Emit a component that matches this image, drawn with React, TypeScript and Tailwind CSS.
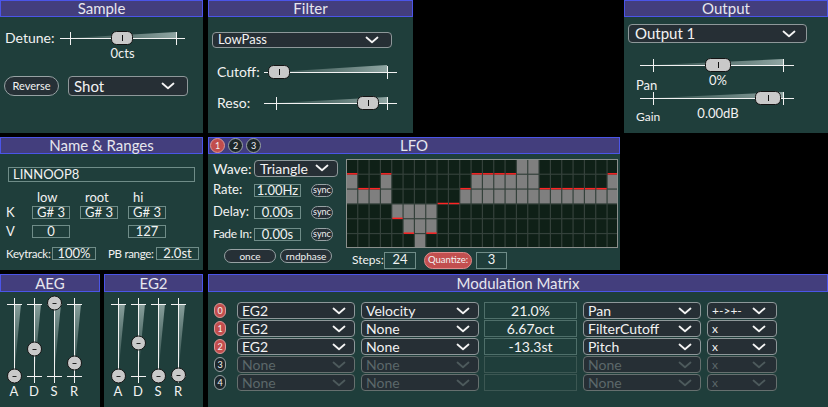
import React from "react";

const lfoSteps = [2, 1, 1, 2, -1, -2, -3, -2, 0, 0, 1, 2, 2, 2, 2, 3, 3, 1, 1, 1, 1, 1, 1, 2];

const matrix = [
  { n: 0, src: "EG2", via: "Velocity", amt: "21.0%", dst: "Pan", curve: "+->+-", on: true },
  { n: 1, src: "EG2", via: "None", amt: "6.67oct", dst: "FilterCutoff", curve: "x", on: true },
  { n: 2, src: "EG2", via: "None", amt: "-13.3st", dst: "Pitch", curve: "x", on: true },
  { n: 3, src: "None", via: "None", amt: "", dst: "None", curve: "x", on: false },
  { n: 4, src: "None", via: "None", amt: "", dst: "None", curve: "x", on: false },
];

function Chevron({ dim = false }: { dim?: boolean }) {
  return (
    <svg width="14" height="8" viewBox="0 0 14 8" className="shrink-0">
      <path
        d="M1.5 1.5 L7 6.2 L12.5 1.5"
        fill="none"
        stroke={dim ? "#4d5a5c" : "#f4f4f4"}
        strokeWidth="1.8"
        strokeLinecap="round"
        strokeLinejoin="round"
      />
    </svg>
  );
}

function Dropdown({ label, className = "", dim = false }: { label: string; className?: string; dim?: boolean }) {
  return (
    <div
      className={`flex items-center justify-between rounded-[4px] border bg-[#262f35] ${
        dim ? "border-[#66706f] text-[#5c686a]" : "border-[#8e989a] text-[#f2f2f2]"
      } ${className}`}
    >
      <span className="whitespace-nowrap">{label}</span>
      <Chevron dim={dim} />
    </div>
  );
}

function HSlider({ width, t1, t2, knob, knobW = 22, wedge = 6 }: { width: number; t1: number; t2: number; knob: number; knobW?: number; wedge?: number }) {
  return (
    <svg width={width} height={16} className="block shrink-0">
      <defs>
        <linearGradient id="wedgeH" x1="0" y1="0" x2="1" y2="0">
          <stop offset="0" stopColor="#6f8884" stopOpacity="0.3" />
          <stop offset="1" stopColor="#a3b8b5" stopOpacity="0.85" />
        </linearGradient>
      </defs>
      <polygon points={`${t1},8 ${t2},${8 - wedge} ${t2},8`} fill="url(#wedgeH)" />
      <line x1={0} y1={8.5} x2={width} y2={8.5} stroke="#f2f2f2" />
      <line x1={t1 + 0.5} y1={2} x2={t1 + 0.5} y2={15} stroke="#f2f2f2" />
      <line x1={t2 + 0.5} y1={2} x2={t2 + 0.5} y2={15} stroke="#f2f2f2" />
      <rect x={knob - knobW / 2 + 0.5} y={1.5} width={knobW - 1} height={13} rx={5} fill="#c9c9c9" stroke="#141414" />
      <line x1={knob + 0.5} y1={5} x2={knob + 0.5} y2={11} stroke="#111" />
    </svg>
  );
}

function VSlider({ knob }: { knob: number }) {
  return (
    <svg width={20} height={90} className="block">
      <defs>
        <linearGradient id="wedgeV" x1="0" y1="0" x2="0" y2="1">
          <stop offset="0" stopColor="#a3b8b5" stopOpacity="0.8" />
          <stop offset="1" stopColor="#6f8884" stopOpacity="0.2" />
        </linearGradient>
      </defs>
      <polygon points="10,9 17,9 10,81" fill="url(#wedgeV)" />
      <line x1={10.5} y1={3} x2={10.5} y2={88} stroke="#f2f2f2" />
      <line x1={3} y1={9.5} x2={18} y2={9.5} stroke="#f2f2f2" />
      <line x1={3} y1={81.5} x2={18} y2={81.5} stroke="#f2f2f2" />
      <circle cx={10.5} cy={knob} r={7} fill="#c9c9c9" stroke="#141414" />
      <line x1={8.5} y1={knob + 0.5} x2={12.5} y2={knob + 0.5} stroke="#222" />
    </svg>
  );
}

function Header({ title, h = "h-[17px]" }: { title: string; h?: string }) {
  return (
    <div className={`${h} flex shrink-0 items-center justify-center border border-[#4b55e8] bg-[#433e7d] text-[15px] leading-none text-[#e6e6ee]`}>
      {title}
    </div>
  );
}

function Box({ children, className = "" }: { children?: React.ReactNode; className?: string }) {
  return (
    <div className={`flex h-[13px] items-center justify-center whitespace-nowrap border border-[#6f8c88] text-[13px] leading-none ${className}`}>
      {children}
    </div>
  );
}

function Pill({ children, className = "" }: { children: React.ReactNode; className?: string }) {
  return (
    <div className={`flex items-center justify-center whitespace-nowrap rounded-full border border-[#97a2a4] bg-[#263036] ${className}`}>
      {children}
    </div>
  );
}

function Envelope({ title, knobs, className = "" }: { title: string; knobs: number[]; className?: string }) {
  return (
    <div className={`flex flex-col bg-[#1f3e3b] ${className}`}>
      <Header title={title} h="h-[18px]" />
      <div className="mt-[3px] flex pl-[4px]">
        {knobs.map((k, i) => (
          <div key={i} className="flex w-[20px] flex-col items-center">
            <VSlider knob={k} />
            <span className="text-[13px] leading-[13px]">{"ADSR"[i]}</span>
          </div>
        ))}
      </div>
    </div>
  );
}

function StepGrid() {
  const w = 272;
  const h = 89;
  const cw = w / 24;
  const ch = h / 6;
  return (
    <svg width={w} height={h} className="block">
      <rect x={0} y={0} width={w} height={h} fill="#34413b" />
      {Array.from({ length: 24 }).map((_, c) =>
        Array.from({ length: 6 }).map((_, r) => {
          const v = lfoSteps[c];
          const on = v > 0 ? r >= 3 - v && r <= 2 : v < 0 ? r >= 3 && r <= 2 - v : false;
          return (
            <rect
              key={`${c}-${r}`}
              x={c * cw + 1}
              y={r * ch + 1}
              width={cw - 1.2}
              height={ch - 1.2}
              fill={on ? "#7f7f7f" : "#0f2017"}
            />
          );
        })
      )}
      {lfoSteps.map((v, c) => (
        <line key={c} x1={c * cw + 1} y1={(3 - v) * ch} x2={(c + 1) * cw} y2={(3 - v) * ch} stroke="#ff2424" strokeWidth={1.5} />
      ))}
      <rect x={0.5} y={0.5} width={w - 1} height={h - 1} fill="none" stroke="#8a8f8c" />
    </svg>
  );
}

export default function App() {
  return (
    <div className="flex h-[407px] w-[828px] flex-col gap-[4px] overflow-hidden bg-black font-['Lato',sans-serif] text-[#f2f2f2]">
      {/* row 1 */}
      <div className="flex h-[133px]">
        <div className="flex w-[203px] flex-col bg-[#1f3e3b]">
          <Header title="Sample" />
          <div className="mt-[13px] flex h-[16px] items-center">
            <span className="w-[60px] pl-[5px] text-[14px] leading-none">Detune:</span>
            <HSlider width={125} t1={10} t2={116} knob={62} />
          </div>
          <div className="ml-[60px] w-[125px] text-center text-[13px] leading-[14px]">0cts</div>
          <div className="ml-[4px] mt-[16px] flex items-center gap-[9px]">
            <Pill className="h-[20px] w-[55px] text-[11px]">Reverse</Pill>
            <Dropdown label="Shot" className="h-[20px] w-[120px] pl-[5px] pr-[12px] text-[15px]" />
          </div>
        </div>

        <div className="ml-[5px] flex w-[205px] flex-col bg-[#1f3e3b]">
          <Header title="Filter" />
          <Dropdown label="LowPass" className="ml-[4px] mt-[15px] h-[16px] w-[180px] pl-[5px] pr-[12px] text-[13px]" />
          <div className="mt-[16px] flex h-[16px] items-center">
            <span className="w-[56px] pl-[9px] text-[14px] leading-none">Cutoff:</span>
            <HSlider width={133} t1={11} t2={123} knob={15} wedge={7} />
          </div>
          <div className="mt-[15px] flex h-[16px] items-center">
            <span className="w-[56px] pl-[9px] text-[14px] leading-none">Reso:</span>
            <HSlider width={133} t1={12} t2={123} knob={104} wedge={6} />
          </div>
        </div>

        <div className="flex-1" />

        <div className="flex w-[204px] flex-col bg-[#1f3e3b]">
          <Header title="Output" />
          <Dropdown label="Output 1" className="ml-[4px] mt-[7px] h-[19px] w-[179px] pl-[6px] pr-[10px] text-[15px]" />
          <div className="ml-[16px] mt-[14px]">
            <HSlider width={154} t1={13} t2={143} knob={78} knobW={26} />
          </div>
          <div className="flex h-[17px]">
            <span className="ml-[12px] w-[28px] pt-[4px] text-[13px] leading-[16px]">Pan</span>
            <span className="w-[108px] text-center text-[13px] leading-[14px]">0%</span>
          </div>
          <div className="ml-[16px]">
            <HSlider width={154} t1={13} t2={143} knob={128} knobW={26} />
          </div>
          <div className="flex">
            <span className="ml-[12px] w-[28px] pt-[3px] text-[12px] leading-[16px]">Gain</span>
            <span className="w-[108px] text-center text-[13px] leading-[14px]">0.00dB</span>
          </div>
        </div>
      </div>

      {/* row 2 */}
      <div className="flex h-[133px]">
        <div className="flex w-[203px] flex-col bg-[#1f3e3b]">
          <Header title="Name & Ranges" />
          <div className="mx-[8px] mt-[13px] flex h-[15px] items-center border border-[#6f8c88] pl-[4px] text-[13px]">
            LINNOOP8
          </div>
          <div className="mt-[8px] flex pl-[32px] text-[13px] leading-[14px]">
            <span className="w-[48px] pl-[5px]">low</span>
            <span className="w-[48px] pl-[5px]">root</span>
            <span className="w-[38px] pl-[5px]">hi</span>
          </div>
          <div className="mt-[2px] flex items-center">
            <span className="w-[32px] pl-[6px] text-[13px] leading-none">K</span>
            <Box className="w-[38px]">G# 3</Box>
            <Box className="ml-[10px] w-[38px]">G# 3</Box>
            <Box className="ml-[10px] w-[38px]">G# 3</Box>
          </div>
          <div className="mt-[6px] flex items-center">
            <span className="w-[32px] pl-[6px] text-[13px] leading-none">V</span>
            <Box className="w-[38px]">0</Box>
            <Box className="ml-[58px] w-[38px]">127</Box>
          </div>
          <div className="mt-[7px] flex items-center whitespace-nowrap text-[11.5px]">
            <span className="w-[52px] pl-[6px] tracking-[-0.3px]">Keytrack:</span>
            <Box className="w-[44px]">100%</Box>
            <span className="ml-[12px] w-[48px] tracking-[-0.3px]">PB range:</span>
            <Box className="w-[43px]">2.0st</Box>
          </div>
        </div>

        <div className="ml-[5px] flex w-[412px] flex-col bg-[#1f3e3b]">
          <div className="grid h-[17px] shrink-0 grid-cols-[1fr_auto_1fr] items-center border border-[#4b55e8] bg-[#433e7d]">
            <div className="flex gap-[3px] pl-[1px]">
              <span className="flex h-[15px] w-[15px] items-center justify-center rounded-full border border-[#d99a9a] bg-[#c24d4d] text-[9px]">1</span>
              <span className="flex h-[15px] w-[15px] items-center justify-center rounded-full border border-[#9aa4a6] bg-[#1d272b] text-[9px]">2</span>
              <span className="flex h-[15px] w-[15px] items-center justify-center rounded-full border border-[#9aa4a6] bg-[#1d272b] text-[9px]">3</span>
            </div>
            <span className="text-[15px] leading-none text-[#e6e6ee]">LFO</span>
            <div />
          </div>
          <div className="flex">
            <div className="flex w-[138px] flex-col pl-[5px] pt-[3px]">
              <div className="flex h-[22px] items-center">
                <span className="w-[41px] text-[14px]">Wave:</span>
                <Dropdown label="Triangle" className="h-[17px] w-[84px] pl-[5px] pr-[8px] text-[14px]" />
              </div>
              <div className="flex h-[22px] items-center">
                <span className="w-[41px] text-[13px]">Rate:</span>
                <Box className="w-[47px] text-[12px]">1.00Hz</Box>
                <Pill className="ml-[10px] h-[13px] w-[22px] text-[9px]">sync</Pill>
              </div>
              <div className="flex h-[22px] items-center">
                <span className="w-[41px] text-[13px]">Delay:</span>
                <Box className="w-[47px]">0.00s</Box>
                <Pill className="ml-[10px] h-[13px] w-[22px] text-[9px]">sync</Pill>
              </div>
              <div className="flex h-[22px] items-center">
                <span className="w-[41px] whitespace-nowrap text-[12px] tracking-[-0.3px]">Fade In:</span>
                <Box className="w-[47px]">0.00s</Box>
                <Pill className="ml-[10px] h-[13px] w-[22px] text-[9px]">sync</Pill>
              </div>
              <div className="flex h-[22px] items-center gap-[4px] pl-[11px]">
                <Pill className="h-[14px] w-[52px] text-[10px]">once</Pill>
                <Pill className="h-[14px] w-[52px] text-[10px]">rndphase</Pill>
              </div>
            </div>
            <div className="flex flex-col pt-[5px]">
              <StepGrid />
              <div className="mt-[3px] flex items-center">
                <span className="w-[38px] pl-[6px] text-[12px]">Steps:</span>
                <div className="flex h-[17px] w-[32px] items-center justify-center border border-[#6f8c88] text-[13px]">24</div>
                <div className="ml-[8px] flex h-[17px] w-[48px] items-center justify-center rounded-full border border-[#df8c8c] bg-[#c24f4f] text-[9.5px]">
                  Quantize:
                </div>
                <div className="ml-[4px] flex h-[17px] w-[31px] items-center justify-center border border-[#6f8c88] text-[13px]">3</div>
              </div>
            </div>
          </div>
        </div>
      </div>

      {/* row 3 */}
      <div className="flex h-[133px]">
        <Envelope title="AEG" knobs={[81, 54, 8, 68]} className="w-[100px]" />
        <Envelope title="EG2" knobs={[81, 48, 81, 80]} className="ml-[4px] w-[99px]" />
        <div className="ml-[5px] flex flex-1 flex-col bg-[#1f3e3b]">
          <Header title="Modulation Matrix" h="h-[18px]" />
          <div className="flex flex-col gap-[1px] pl-[6px] pt-[10px]">
            {matrix.map((r) => (
              <div key={r.n} className="flex h-[17px] items-center">
                <span
                  className={`flex h-[15px] w-[12px] items-center justify-center rounded-full border text-[9px] ${
                    r.on ? "border-[#d99a9a] bg-[#c24d4d]" : "border-[#9aa4a6] bg-[#1d272b]"
                  }`}
                >
                  {r.n}
                </span>
                <Dropdown label={r.src} dim={!r.on} className="ml-[11px] h-[17px] w-[118px] pl-[4px] pr-[8px] text-[14px]" />
                <Dropdown label={r.via} dim={!r.on} className="ml-[6px] h-[17px] w-[118px] pl-[4px] pr-[8px] text-[14px]" />
                <div
                  className={`ml-[5px] flex h-[17px] w-[93px] items-center justify-center border text-[14px] ${
                    r.on ? "border-[#4f6f6a]" : "border-[#3c5753]"
                  }`}
                >
                  {r.amt}
                </div>
                <Dropdown label={r.dst} dim={!r.on} className="ml-[6px] h-[17px] w-[118px] pl-[4px] pr-[8px] text-[14px]" />
                <Dropdown label={r.curve} dim={!r.on} className="ml-[6px] h-[17px] w-[70px] pl-[4px] pr-[10px] text-[12px]" />
              </div>
            ))}
          </div>
        </div>
      </div>
    </div>
  );
}
